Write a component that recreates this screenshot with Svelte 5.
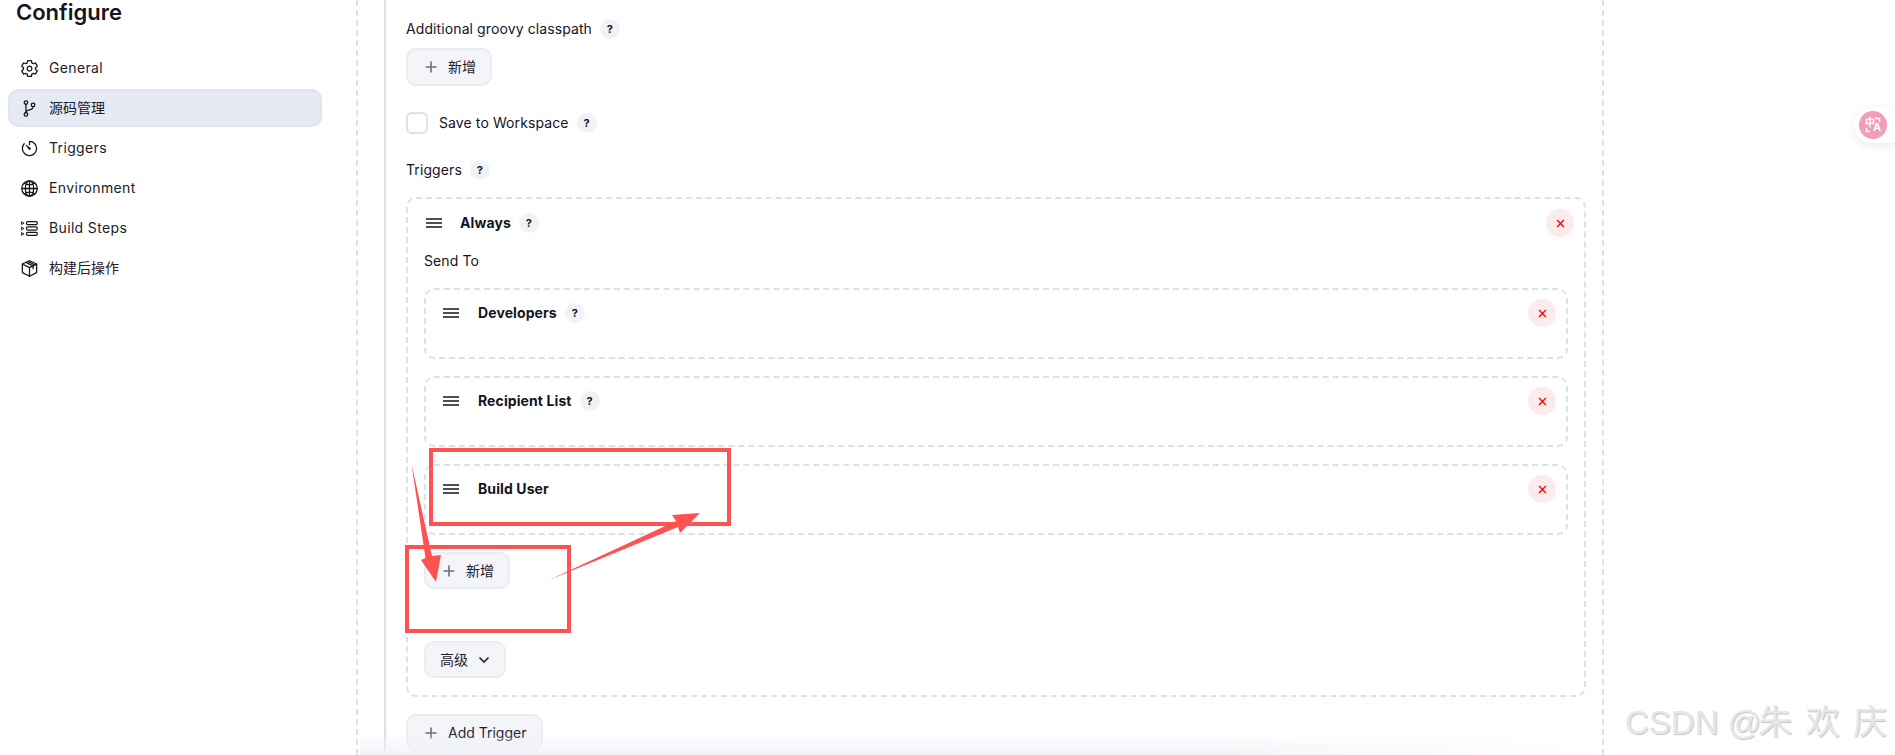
<script>
  const nested = ['Developers', 'Recipient List', 'Build User'];
  const helpless = 'Build User';
</script>

{#snippet help(cls = '')}
  <span class="help {cls}">?</span>
{/snippet}

{#snippet plus()}
  <svg class="plus" viewBox="0 0 14 14"><path d="M7 1.500v11M1.500 7h11" /></svg>
{/snippet}

{#snippet handle()}
  <svg class="handle" viewBox="0 0 16 10"><path d="M0 1h16M0 5h16M0 9h16" /></svg>
{/snippet}

{#snippet close()}
  <span class="close">
    <svg viewBox="0 0 10 10"><path d="M1.200 1.200l7.600 7.600M8.800 1.200L1.200 8.800" /></svg>
  </span>
{/snippet}

<div class="page">
  <aside class="side">
    <h1>Configure</h1>
    <nav>
      <a class="item latin">
        <svg viewBox="0 0 512 512" class="ico"><path d="M262.29 192.31a64 64 0 1057.4 57.4 64.13 64.13 0 00-57.4-57.4zM416.39 256a154.34 154.34 0 01-1.53 20.79l45.21 35.46a10.81 10.81 0 012.45 13.75l-42.77 74a10.81 10.81 0 01-13.14 4.59l-44.9-18.08a16.11 16.11 0 00-15.17 1.75A164.48 164.48 0 01325 400.8a15.94 15.94 0 00-8.82 12.14l-6.73 47.89a11.08 11.08 0 01-10.68 9.17h-85.54a11.11 11.11 0 01-10.69-8.87l-6.72-47.82a16.07 16.07 0 00-9-12.22 155.3 155.3 0 01-21.46-12.57 16 16 0 00-15.11-1.71l-44.89 18.07a10.81 10.81 0 01-13.14-4.58l-42.77-74a10.8 10.8 0 012.45-13.75l38.21-30a16.05 16.05 0 006-14.08c-.36-4.17-.58-8.33-.58-12.5s.21-8.27.58-12.35a16 16 0 00-6.07-13.94l-38.19-30A10.81 10.81 0 0149.48 186l42.77-74a10.81 10.81 0 0113.14-4.59l44.9 18.08a16.11 16.11 0 0015.17-1.75A164.48 164.48 0 01187 111.2a15.94 15.94 0 008.82-12.14l6.73-47.89A11.08 11.08 0 01213.23 42h85.54a11.11 11.11 0 0110.69 8.87l6.72 47.82a16.07 16.07 0 009 12.22 155.3 155.3 0 0121.46 12.57 16 16 0 0015.11 1.71l44.89-18.07a10.81 10.81 0 0113.14 4.58l42.77 74a10.8 10.8 0 01-2.45 13.75l-38.21 30a16.05 16.05 0 00-6.05 14.08c.33 4.14.55 8.3.55 12.47z" /></svg>
        General
      </a>
      <a class="item active">
        <svg viewBox="0 0 512 512" class="ico"><circle cx="160" cy="96" r="48" /><circle cx="160" cy="416" r="48" /><path d="M160 368V144" /><circle cx="352" cy="160" r="48" /><path d="M352 208c0 128-192 48-192 160" /></svg>
        源码管理
      </a>
      <a class="item latin">
        <svg viewBox="0 0 512 512" class="ico"><path d="M112.91 128A191.85 191.85 0 0064 254c-1.18 106.35 85.65 193.8 192 194 106.2.2 192-85.83 192-192 0-104.54-83.55-189.61-187.5-192a4.36 4.36 0 00-4.5 4.37V152" /><path class="solid-fill" d="M233.38 278.63l-79-113a8.13 8.13 0 0111.32-11.32l113 79a32.5 32.5 0 01-37.25 53.26 33.21 33.21 0 01-8.07-8.94z" /></svg>
        Triggers
      </a>
      <a class="item latin">
        <svg viewBox="0 0 512 512" class="ico"><path d="M256 48C141.13 48 48 141.13 48 256s93.13 208 208 208 208-93.13 208-208S370.87 48 256 48z" /><path d="M256 48c-58.07 0-112.67 92.48-112.67 208S197.93 464 256 464s112.67-92.48 112.67-208S314.07 48 256 48z" /><path d="M117.33 117.33c38.24 27.15 86.38 43.34 138.67 43.34s100.43-16.19 138.67-43.34M394.67 394.67c-38.24-27.15-86.38-43.34-138.67-43.34s-100.43 16.19-138.67 43.34" /><path d="M256 48v416M464 256H48" /></svg>
        Environment
      </a>
      <a class="item latin">
        <svg viewBox="0 0 512 512" class="ico"><rect x="176" y="70" width="288" height="84" rx="32" /><rect x="176" y="214" width="288" height="84" rx="32" /><rect x="176" y="358" width="288" height="84" rx="32" /><path class="thin" d="M50 80l60 32-60 32zM50 224l60 32-60 32zM50 368l60 32-60 32z" /></svg>
        Build Steps
      </a>
      <a class="item">
        <svg viewBox="0 0 512 512" class="ico"><path d="M256 46L448 136V366L256 466 64 366V136z" /><path d="M64 136l192 96 192-96M256 232v234" /><path d="M160 90l192 96v76M214 66l192 96" /></svg>
        构建后操作
      </a>
    </nav>
  </aside>

  <main class="main">
    <div class="rail">
      <div class="row">Additional groovy classpath {@render help()}</div>
      <button class="btn first">{@render plus()}新增</button>

      <label class="check">
        <span class="box"></span>
        <span class="check-label">Save to Workspace</span>
        {@render help('tight')}
      </label>

      <div class="row triggers">Triggers {@render help()}</div>

      <section class="card outer">
        <header class="head">
          <div class="title">{@render handle()}<b>Always</b>{@render help()}</div>
          {@render close()}
        </header>
        <div class="send">Send To</div>

        {#each nested as name}
          <div class="card inner">
            <header class="head">
              <div class="title">
                {@render handle()}<b>{name}</b>
                {#if name !== helpless}{@render help()}{/if}
              </div>
              {@render close()}
            </header>
          </div>
        {/each}

        <button class="btn add">{@render plus()}新增</button>
        <button class="btn adv">高级
          <svg class="chev" viewBox="0 0 12 8"><path d="M1.500 1.500L6 6l4.500-4.500" /></svg>
        </button>
      </section>

      <button class="btn trigger">{@render plus()}Add Trigger</button>
    </div>
  </main>

  <div class="fade"></div>

  <div class="translate">
    <span class="disc">
      <svg viewBox="0 0 28 28" class="brackets"><path d="M16 7.500h4.500V11M7.500 17v3.500H11" /></svg>
      <span class="zh">中</span><span class="en">A</span>
    </span>
  </div>

  <svg class="marks" viewBox="0 0 1895 755" aria-hidden="true">
    <rect x="431" y="450" width="298" height="74" />
    <rect x="407" y="547" width="162" height="84" />
    <polygon points="411.500,464 432,556 441,555 436,582 421,560 425.500,558" />
    <polygon points="549,580 676,521 672,515 700,513 680,533 678,527" />
  </svg>

  <div class="mark">CSDN @<span class="cjk">朱 欢 庆</span></div>
</div>

<style>
  :global(body) {
    margin: 0;
    background: #fff;
  }
  .page {
    position: relative;
    display: flex;
    width: 1895px;
    height: 755px;
    overflow: hidden;
    background: #fff;
    color: #14141f;
    font: 14px/20px Inter, "Noto Sans CJK SC", sans-serif;
  }
  .side {
    width: 356px;
    flex: none;
    box-sizing: border-box;
    padding-left: 8px;
  }
  h1 {
    margin: 0;
    padding: 0 0 0 8px;
    font-size: 22px;
    line-height: 25px;
    font-weight: 600;
  }
  nav {
    margin-top: 24px;
    display: flex;
    flex-direction: column;
    gap: 2px;
    width: 314px;
  }
  .item {
    display: flex;
    align-items: center;
    gap: 10px;
    height: 38px;
    box-sizing: border-box;
    padding-left: 10px;
    border: 2px solid transparent;
    border-radius: 10px;
    font-size: 14px;
    color: #20202c;
  }
  .latin {
    letter-spacing: 0.35px;
  }
  .active {
    background: #e6eaf2;
    border-color: #e1e6ee;
  }
  .ico {
    width: 19px;
    height: 19px;
    flex: none;
    fill: none;
    stroke: #14141f;
    stroke-width: 34;
    stroke-linecap: round;
    stroke-linejoin: round;
  }
  .solid-fill {
    fill: #14141f;
    stroke: none;
  }
  .thin {
    stroke-width: 24;
  }
  .main {
    width: 1248px;
    flex: none;
    height: 755px;
    box-sizing: border-box;
    border-left: 2px dashed #d9e2ee;
    border-right: 2px dashed #d9e2ee;
  }
  .rail {
    margin-left: 26px;
    height: 100%;
    box-sizing: border-box;
    border-left: 2px solid #d7e0ec;
    padding: 19px 0 0 20px;
    width: 1200px;
    letter-spacing: 0.1px;
  }
  .row {
    display: flex;
    align-items: center;
    gap: 8px;
    height: 20px;
  }
  .help {
    width: 20px;
    height: 20px;
    flex: none;
    display: inline-flex;
    align-items: center;
    justify-content: center;
    border-radius: 50%;
    background: #f1f2f6;
    font-size: 11px;
    font-weight: 700;
  }
  .btn {
    display: flex;
    align-items: center;
    box-sizing: border-box;
    height: 38px;
    padding: 0 16px;
    background: #f4f5f9;
    border: 2px solid #eaecf1;
    border-radius: 10px;
    font: inherit;
    font-size: 14px;
    color: #20202c;
    white-space: nowrap;
  }
  .plus {
    width: 14px;
    height: 14px;
    flex: none;
    margin-right: 10px;
    fill: none;
    stroke: #6b6f7c;
    stroke-width: 1.600;
  }
  .first {
    margin-top: 9px;
    width: 86px;
  }
  .check {
    display: flex;
    align-items: center;
    margin-top: 26px;
    height: 22px;
  }
  .box {
    width: 22px;
    height: 22px;
    box-sizing: border-box;
    border: 2px solid #d8e1ed;
    border-radius: 6px;
    background: #fff;
  }
  .check-label {
    margin-left: 11px;
    margin-right: 8px;
  }
  .triggers {
    margin-top: 26px;
  }
  .card {
    box-sizing: border-box;
    border: 2px dashed #d9e2ee;
    border-radius: 10px;
  }
  .outer {
    margin-top: 17px;
    width: 1180px;
    height: 500px;
    padding: 10px 10px 0 16px;
  }
  .head {
    display: flex;
    justify-content: space-between;
    align-items: center;
    height: 28px;
  }
  .title {
    display: flex;
    align-items: center;
    padding-left: 2px;
  }
  .title b {
    font-weight: 700;
    margin-right: 8px;
  }
  .handle {
    width: 16px;
    height: 10px;
    margin-right: 18px;
    fill: none;
    stroke: #14141f;
    stroke-width: 1.300;
  }
  .inner .title {
    padding-left: 1px;
  }
  .inner .handle {
    margin-right: 19px;
  }
  .close {
    width: 28px;
    height: 28px;
    display: flex;
    align-items: center;
    justify-content: center;
    border-radius: 50%;
    background: #fcebeb;
  }
  .close svg {
    width: 9px;
    height: 9px;
    fill: none;
    stroke: #f00;
    stroke-width: 1.500;
  }
  .send {
    margin: 14px 0 0 0;
    height: 20px;
  }
  .inner {
    width: 1144px;
    height: 71px;
    margin: 17px 0 0;
    padding: 9px 10px 0 16px;
  }
  .add {
    margin: 17px 0 0 0;
    width: 86px;
    height: 37px;
  }
  .adv {
    margin: 52px 0 0 0;
    width: 82px;
    height: 37px;
    padding: 0 14px;
  }
  .chev {
    width: 12px;
    height: 8px;
    margin-left: 10px;
    fill: none;
    stroke: #20202c;
    stroke-width: 1.600;
  }
  .trigger {
    margin-top: 17px;
    width: 137px;
    height: 37px;
  }
  .fade {
    position: absolute;
    left: 360px;
    right: 292px;
    bottom: 0;
    height: 22px;
    background: linear-gradient(rgba(240, 242, 247, 0), rgba(240, 242, 247, 0.9));
    -webkit-mask-image: linear-gradient(90deg, #000 70%, transparent);
    mask-image: linear-gradient(90deg, #000 70%, transparent);
    pointer-events: none;
  }
  .translate {
    position: absolute;
    top: 107px;
    right: 0;
    width: 41px;
    height: 36px;
    padding: 4px 0 0 5px;
    box-sizing: border-box;
    background: #fff;
    border-radius: 18px 0 0 18px;
    box-shadow: 0 3px 10px rgba(0, 0, 0, 0.08);
  }
  .disc {
    position: relative;
    display: block;
    width: 28px;
    height: 28px;
    border-radius: 50%;
    background: #f39eb6;
    color: #fff;
    font-weight: 700;
  }
  .brackets {
    position: absolute;
    inset: 0;
    fill: none;
    stroke: #fff;
    stroke-width: 1.500;
  }
  .zh {
    position: absolute;
    left: 6px;
    top: 5px;
    font-size: 10px;
    line-height: 12px;
  }
  .en {
    position: absolute;
    left: 14px;
    top: 10px;
    font-size: 11px;
    line-height: 13px;
  }
  .marks {
    position: absolute;
    inset: 0;
    width: 1895px;
    height: 755px;
    pointer-events: none;
  }
  .marks rect {
    fill: none;
    stroke: #fd5252;
    stroke-width: 4;
  }
  .marks polygon {
    fill: #fd5252;
  }
  .mark {
    position: absolute;
    left: 1625px;
    top: 702px;
    font: 33px/40px "Liberation Sans", "Noto Sans CJK SC", sans-serif;
    color: #e6e6e6;
    text-shadow: 1px 1px 1px #c4c4c4;
    white-space: nowrap;
  }
  .cjk {
    margin-left: -3px;
    font-size: 34px;
    word-spacing: 4px;
  }
</style>
